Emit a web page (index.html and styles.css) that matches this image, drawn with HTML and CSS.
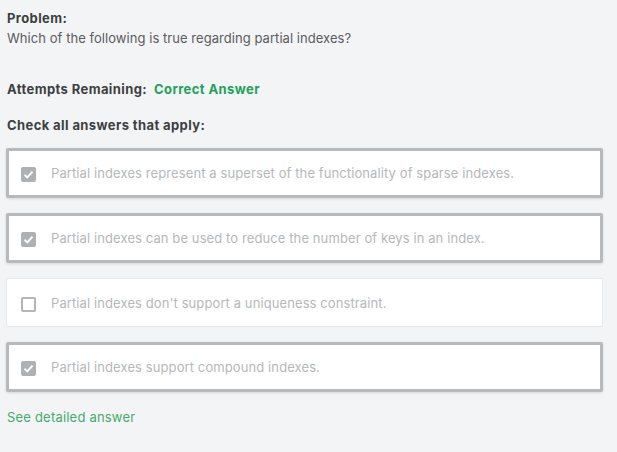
FILE: index.html
```html
<!DOCTYPE html>
<html>
<head>
<meta charset="utf-8">
<link rel="stylesheet" href="styles.css">
</head>
<body>
<div class="page">
  <div class="problem">
    <div class="label">Problem:</div>
    <div class="question">Which of the following is true regarding partial indexes?</div>
  </div>
  <div class="attempts"><span class="label">Attempts Remaining:</span><span class="correct">Correct Answer</span></div>
  <div class="label check-label">Check all answers that apply:</div>
  <div class="options">
    <div class="option checked">
      <span class="box"><svg viewBox="0 0 15 15" width="15" height="15"><path d="M3.5 7.8 L6.3 10.4 L11.5 4.6" fill="none" stroke="#fff" stroke-width="2"/></svg></span>
      <span class="text">Partial indexes represent a superset of the functionality of sparse indexes.</span>
    </div>
    <div class="option checked">
      <span class="box"><svg viewBox="0 0 15 15" width="15" height="15"><path d="M3.5 7.8 L6.3 10.4 L11.5 4.6" fill="none" stroke="#fff" stroke-width="2"/></svg></span>
      <span class="text">Partial indexes can be used to reduce the number of keys in an index.</span>
    </div>
    <div class="option">
      <span class="box empty"></span>
      <span class="text">Partial indexes don't support a uniqueness constraint.</span>
    </div>
    <div class="option checked">
      <span class="box"><svg viewBox="0 0 15 15" width="15" height="15"><path d="M3.5 7.8 L6.3 10.4 L11.5 4.6" fill="none" stroke="#fff" stroke-width="2"/></svg></span>
      <span class="text">Partial indexes support compound indexes.</span>
    </div>
  </div>
  <div class="detail-row"><a class="detail" href="#">See detailed answer</a></div>
</div>
</body>
</html>
```

FILE: styles.css
```css
html, body {
  margin: 0;
  padding: 0;
  background: #f3f4f6;
}
body {
  font-family: Inter, "Liberation Sans", Arial, sans-serif;
  font-size: 13px;
  line-height: 16px;
  color: #555;
}
.page {
  padding: 10px 14px 0 6px;
}
.label {
  font-weight: 700;
  color: #3d3f42;
  font-size: 13px;
  letter-spacing: 0.4px;
}
.problem {
  padding-left: 1px;
}
.question {
  margin-top: 4px;
  color: #5a5c5e;
  letter-spacing: 0.05px;
}
.attempts {
  margin-top: 35px;
  padding-left: 1px;
  display: flex;
  gap: 7px;
}
.correct {
  color: #21a25a;
  font-weight: 700;
  font-size: 13px;
  letter-spacing: 0.4px;
}
.check-label {
  margin-top: 20px;
  padding-left: 1px;
}
.options {
  margin-top: 15px;
  display: flex;
  flex-direction: column;
  gap: 15px;
}
.option {
  height: 49px;
  box-sizing: border-box;
  background: #fff;
  border: 1px solid #e6e8ea;
  border-radius: 2px;
  display: flex;
  align-items: center;
  padding-left: 14px;
  gap: 15px;
}
.option.checked {
  height: 50px;
  border: 3px solid #b6babd;
  box-shadow: 0 1px 3px rgba(0,0,0,0.12);
  padding-left: 12px;
}
.box {
  width: 15px;
  height: 15px;
  border-radius: 2px;
  background: #adb1b4;
  display: block;
  flex: none;
  margin-top: 3px;
}
.box svg { display: block; }
.box.empty {
  background: #fff;
  box-sizing: border-box;
  border: 2px solid #b3b6b8;
}
.text {
  color: #b5b8ba;
  font-size: 13px;
  letter-spacing: 0.1px;
}
.detail-row {
  margin-top: 17px;
  padding-left: 1px;
}
.detail {
  color: #45aa6e;
  text-decoration: none;
  font-size: 13px;
  letter-spacing: 0.2px;
}
```
